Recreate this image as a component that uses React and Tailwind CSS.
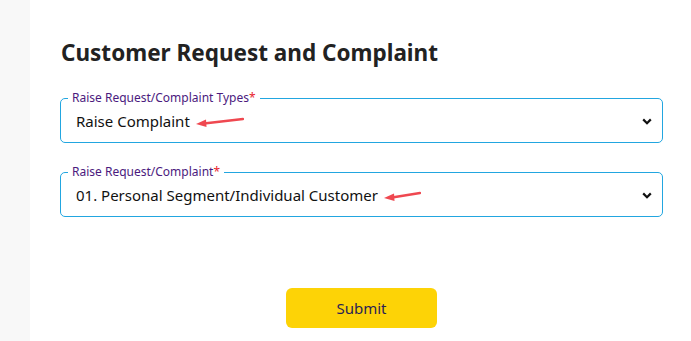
import React from "react";

const Arrow = ({ width }) => (
  <svg width={width} height="10" viewBox={`0 0 ${width} 10`} className="ml-[6px] shrink-0">
    <line x1={width - 1} y1="2" x2="8" y2="6.5" stroke="#ef4850" strokeWidth="2.4" strokeLinecap="round" />
    <polygon points="0,7 10,2.5 10.5,10" fill="#ef4850" />
  </svg>
);

const Chevron = () => (
  <svg width="10" height="7" viewBox="0 0 10 7" className="shrink-0">
    <path d="M1.2 1.4 L5 5.2 L8.8 1.4" fill="none" stroke="#111" strokeWidth="2.2" />
  </svg>
);

const SelectField = ({ label, value, arrow }) => (
  <fieldset className="border border-[#22a6e0] rounded-[5px] pl-[7px] pr-[10px] pt-0 pb-0 m-0 min-w-0">
    <legend className="px-[4px] text-[12px] leading-[14px] text-[#4b1a7e]">
      {label}
      <span className="text-[#e8222c]">*</span>
    </legend>
    <div className="flex items-center justify-between h-[37px] pb-[4px]">
      <div className="flex items-center pl-[8px] text-[15px] text-[#111]">
        <span>{value}</span>
        <Arrow width={arrow} />
      </div>
      <Chevron />
    </div>
  </fieldset>
);

export default function App() {
  const fields = [
    { label: "Raise Request/Complaint Types", value: "Raise Complaint", arrow: 48 },
    { label: "Raise Request/Complaint", value: "01. Personal Segment/Individual Customer", arrow: 37 },
  ];

  return (
    <div className="flex h-[341px] w-[691px] bg-white overflow-hidden" style={{ fontFamily: '"Noto Sans", "Open Sans", sans-serif' }}>
      <div className="w-[30px] h-full bg-[#f8f8f8] shrink-0" />
      <div className="flex-1 pl-[30px] pr-[28px] pt-[38px]">
        <h1 className="text-[22.5px] leading-[30px] font-bold text-[#222] pl-[1px] mb-[23px]">
          Customer Request and Complaint
        </h1>
        <div className="flex flex-col gap-[22px]">
          {fields.map((f, i) => (
            <SelectField key={i} {...f} />
          ))}
        </div>
        <div className="flex justify-center mt-[71px]">
          <button className="w-[151px] h-[40px] rounded-[6px] bg-[#fdd306] text-[15px] text-[#2a1f55]">
            Submit
          </button>
        </div>
      </div>
    </div>
  );
}
